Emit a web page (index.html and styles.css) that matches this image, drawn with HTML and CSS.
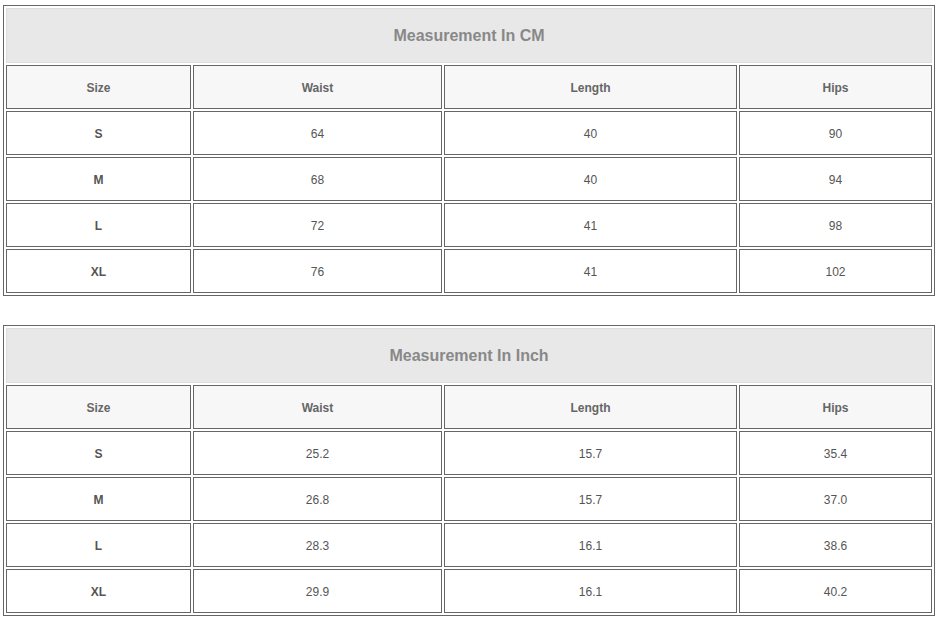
FILE: index.html
```html
<!DOCTYPE html>
<html>
<head>
<meta charset="utf-8">
<link rel="stylesheet" href="styles.css">
</head>
<body>
<div class="page">
<table class="size-table">
  <colgroup><col class="c-size"><col class="c-waist"><col class="c-length"><col class="c-hips"></colgroup>
  <tr><td class="title" colspan="4">Measurement In CM</td></tr>
  <tr class="head"><td>Size</td><td>Waist</td><td>Length</td><td>Hips</td></tr>
  <tr><td class="sz">S</td><td>64</td><td>40</td><td>90</td></tr>
  <tr><td class="sz">M</td><td>68</td><td>40</td><td>94</td></tr>
  <tr><td class="sz">L</td><td>72</td><td>41</td><td>98</td></tr>
  <tr><td class="sz">XL</td><td>76</td><td>41</td><td>102</td></tr>
</table>
<table class="size-table">
  <colgroup><col class="c-size"><col class="c-waist"><col class="c-length"><col class="c-hips"></colgroup>
  <tr><td class="title" colspan="4">Measurement In Inch</td></tr>
  <tr class="head"><td>Size</td><td>Waist</td><td>Length</td><td>Hips</td></tr>
  <tr><td class="sz">S</td><td>25.2</td><td>15.7</td><td>35.4</td></tr>
  <tr><td class="sz">M</td><td>26.8</td><td>15.7</td><td>37.0</td></tr>
  <tr><td class="sz">L</td><td>28.3</td><td>16.1</td><td>38.6</td></tr>
  <tr><td class="sz">XL</td><td>29.9</td><td>16.1</td><td>40.2</td></tr>
</table>
</div>
</body>
</html>
```
FILE: styles.css
```css
html, body {
  margin: 0;
  padding: 0;
  background: #fff;
}
.page {
  padding: 5px 0 0 3px;
  display: flex;
  flex-direction: column;
  gap: 29px;
  font-family: "Liberation Sans", Arial, sans-serif;
}
.size-table {
  width: 932px;
  table-layout: fixed;
  border-collapse: separate;
  border-spacing: 2px;
  border: 1px solid #666;
}
.c-size { width: 185px; }
.c-waist { width: 249px; }
.c-length { width: 293px; }
.c-hips { width: 193px; }
.size-table td {
  box-sizing: border-box;
  height: 44px;
  padding: 2px 0 0 0;
  border: 1px solid #666;
  text-align: center;
  vertical-align: middle;
  font-size: 12px;
  color: #555;
  background: #fff;
}
.size-table td.title {
  height: 55px;
  padding: 0;
  border: 1px solid #ddd;
  background: #e8e8e8;
  font-size: 16px;
  font-weight: bold;
  color: #888;
}
.size-table tr.head td {
  background: #f7f7f7;
  font-weight: bold;
  color: #666;
}
.size-table td.sz {
  font-weight: bold;
  color: #555;
}
```
